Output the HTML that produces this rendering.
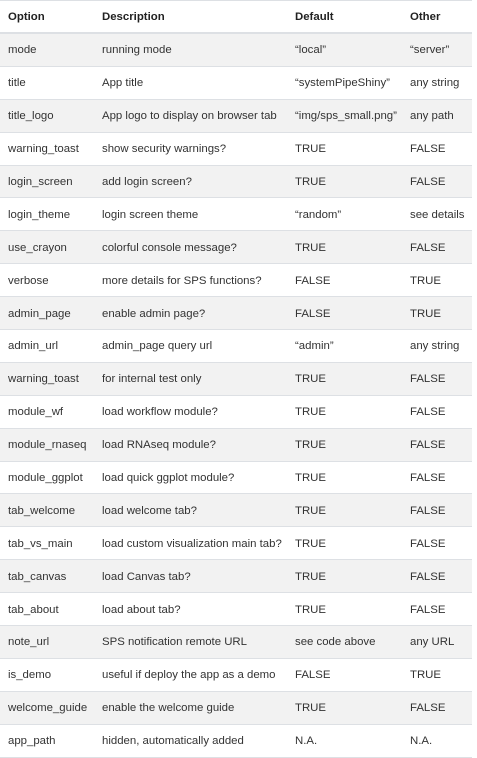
<!DOCTYPE html>
<html><head><meta charset="utf-8"><style>
body{margin:0;background:#fff;width:477px;height:757px;overflow:hidden}
table{border-collapse:collapse;width:472px;font-family:"Liberation Sans",sans-serif;font-size:11.4px;color:#333;table-layout:fixed;border-top:1px solid #dde0e4}
th{text-align:left;font-weight:bold;height:30px;padding:1px 0 0 8px;border-bottom:2px solid #dde0e4;color:#222}
td{height:30.9px;padding:1px 0 0 8px;border-bottom:1px solid #dde0e4;white-space:nowrap}
tbody tr:nth-child(odd){background:#f2f2f2}
</style></head><body>
<table>
<colgroup><col style="width:94px"><col style="width:193px"><col style="width:115px"><col style="width:70px"></colgroup>
<thead><tr><th>Option</th><th>Description</th><th>Default</th><th>Other</th></tr></thead>
<tbody>
<tr><td>mode</td><td>running mode</td><td>“local”</td><td>“server”</td></tr>
<tr><td>title</td><td>App title</td><td>“systemPipeShiny”</td><td>any string</td></tr>
<tr><td>title_logo</td><td>App logo to display on browser tab</td><td>“img/sps_small.png”</td><td>any path</td></tr>
<tr><td>warning_toast</td><td>show security warnings?</td><td>TRUE</td><td>FALSE</td></tr>
<tr><td>login_screen</td><td>add login screen?</td><td>TRUE</td><td>FALSE</td></tr>
<tr><td>login_theme</td><td>login screen theme</td><td>“random”</td><td>see details</td></tr>
<tr><td>use_crayon</td><td>colorful console message?</td><td>TRUE</td><td>FALSE</td></tr>
<tr><td>verbose</td><td>more details for SPS functions?</td><td>FALSE</td><td>TRUE</td></tr>
<tr><td>admin_page</td><td>enable admin page?</td><td>FALSE</td><td>TRUE</td></tr>
<tr><td>admin_url</td><td>admin_page query url</td><td>“admin”</td><td>any string</td></tr>
<tr><td>warning_toast</td><td>for internal test only</td><td>TRUE</td><td>FALSE</td></tr>
<tr><td>module_wf</td><td>load workflow module?</td><td>TRUE</td><td>FALSE</td></tr>
<tr><td>module_rnaseq</td><td>load RNAseq module?</td><td>TRUE</td><td>FALSE</td></tr>
<tr><td>module_ggplot</td><td>load quick ggplot module?</td><td>TRUE</td><td>FALSE</td></tr>
<tr><td>tab_welcome</td><td>load welcome tab?</td><td>TRUE</td><td>FALSE</td></tr>
<tr><td>tab_vs_main</td><td>load custom visualization main tab?</td><td>TRUE</td><td>FALSE</td></tr>
<tr><td>tab_canvas</td><td>load Canvas tab?</td><td>TRUE</td><td>FALSE</td></tr>
<tr><td>tab_about</td><td>load about tab?</td><td>TRUE</td><td>FALSE</td></tr>
<tr><td>note_url</td><td>SPS notification remote URL</td><td>see code above</td><td>any URL</td></tr>
<tr><td>is_demo</td><td>useful if deploy the app as a demo</td><td>FALSE</td><td>TRUE</td></tr>
<tr><td>welcome_guide</td><td>enable the welcome guide</td><td>TRUE</td><td>FALSE</td></tr>
<tr><td>app_path</td><td>hidden, automatically added</td><td>N.A.</td><td>N.A.</td></tr>
</tbody></table>
</body></html>
